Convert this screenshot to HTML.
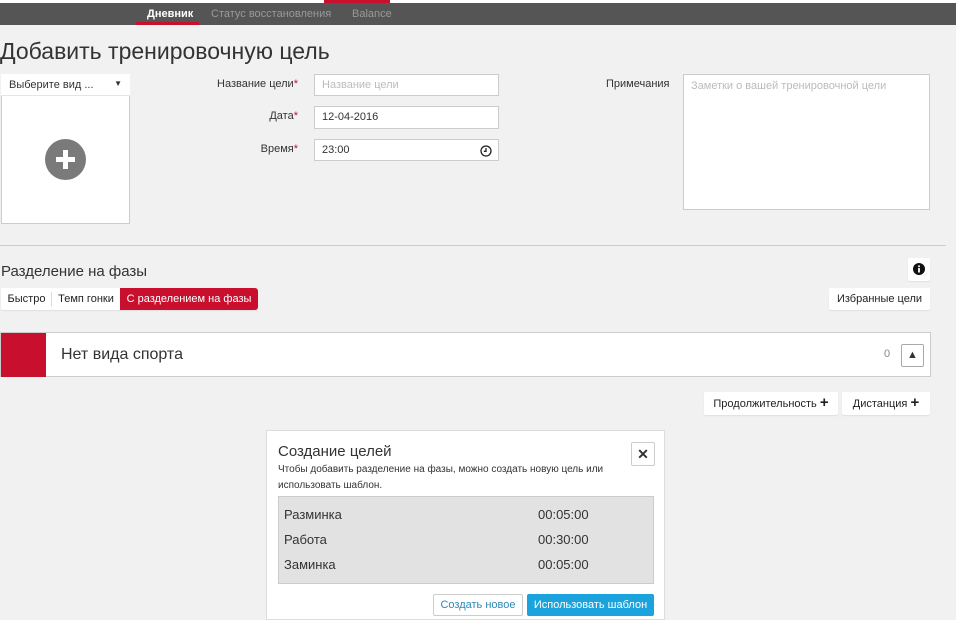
<!DOCTYPE html>
<html><head><meta charset="utf-8"><style>
*{box-sizing:border-box;margin:0;padding:0}
body{width:956px;height:613px;overflow:hidden;background:#f1f1f1;font-family:"Liberation Sans",sans-serif;color:#333;position:relative}
.a{position:absolute}
.inp{position:absolute;background:#fff;border:1px solid #ccc;font-size:11px;padding:0 7px;line-height:20px}
.lbl{position:absolute;font-size:11px;text-align:right;width:200px}
.lbl b{color:#c8102e;font-weight:normal}
.btn{position:absolute;background:#fff;border-radius:2px;box-shadow:0 1px 1px rgba(0,0,0,.08);font-size:11px;text-align:center;line-height:22px;color:#222}
</style></head><body>
<div class="a" style="left:0;top:0;width:956px;height:3px;background:#fff"></div>
<div class="a" style="left:324px;top:0;width:66px;height:3px;background:#c8102e"></div>
<div class="a" style="left:0;top:3px;width:956px;height:22px;background:#555"></div>
<div class="a" style="left:147px;top:8px;font-size:11px;color:#fff;font-weight:bold">Дневник</div>
<div class="a" style="left:136px;top:22px;width:63px;height:3px;background:#c8102e"></div>
<div class="a" style="left:211px;top:8px;font-size:11px;color:#999">Статус восстановления</div>
<div class="a" style="left:352px;top:8px;font-size:11px;color:#999">Balance</div>
<div class="a" style="left:0;top:38px;font-size:23px;color:#333">Добавить тренировочную цель</div>

<div class="a" style="left:1px;top:74px;width:129px;height:22px;background:#fff;font-size:11px;padding:5px 8px;border-bottom:1px solid #e5e5e5">Выберите вид ...<span style="position:absolute;right:8px;top:5px;font-size:8px">▼</span></div>
<div class="a" style="left:1px;top:96px;width:129px;height:128px;background:#fff;border:1px solid #ccc;border-top:none"></div>
<div class="a" style="left:45px;top:139px;width:41px;height:41px;border-radius:50%;background:#7a7a7a"></div>
<div class="a" style="left:56px;top:157px;width:19px;height:5px;background:#fff"></div>
<div class="a" style="left:63px;top:150px;width:5px;height:19px;background:#fff"></div>

<div class="lbl" style="left:98px;top:78px">Название цели<b>*</b></div>
<div class="lbl" style="left:98px;top:110px">Дата<b>*</b></div>
<div class="lbl" style="left:98px;top:143px">Время<b>*</b></div>
<div class="inp" style="left:314px;top:74px;width:185px;height:22px;color:#bbb">Название цели</div>
<div class="inp" style="left:314px;top:106px;width:185px;height:23px">12-04-2016</div>
<div class="inp" style="left:314px;top:139px;width:185px;height:22px">23:00
<svg style="position:absolute;right:6px;top:5px" width="12" height="12" viewBox="0 0 12 12"><circle cx="6" cy="6" r="5" fill="none" stroke="#222" stroke-width="1.3"/><path d="M6 3v3.3H3.8" fill="none" stroke="#222" stroke-width="1.3"/></svg></div>
<div class="a" style="left:606px;top:78px;font-size:11px">Примечания</div>
<div class="inp" style="left:683px;top:74px;width:247px;height:136px;color:#bbb;line-height:22px">Заметки о вашей тренировочной цели</div>

<div class="a" style="left:0;top:245px;width:946px;height:1px;background:#ccc"></div>
<div class="a" style="left:1px;top:263px;font-size:15px">Разделение на фазы</div>
<div class="btn" style="left:908px;top:258px;width:22px;height:23px"><svg width="12" height="12" viewBox="0 0 12 12" style="margin-top:5px"><circle cx="6" cy="6" r="6" fill="#111"/><rect x="5.1" y="5" width="1.8" height="4.5" fill="#fff"/><circle cx="6" cy="3.2" r="1" fill="#fff"/></svg></div>
<div class="btn" style="left:1px;top:288px;width:51px;height:22px;border-radius:2px 0 0 2px">Быстро</div>
<div class="a" style="left:51px;top:292px;width:1px;height:14px;background:#ddd"></div>
<div class="btn" style="left:52px;top:288px;width:68px;height:22px;border-radius:0">Темп гонки</div>
<div class="btn" style="left:120px;top:288px;width:138px;height:22px;background:#c8102e;color:#fff;border-radius:0 3px 3px 0">С разделением на фазы</div>
<div class="btn" style="left:829px;top:288px;width:101px;height:22px">Избранные цели</div>

<div class="a" style="left:0;top:332px;width:931px;height:45px;background:#fff;border:1px solid #ccc"></div>
<div class="a" style="left:1px;top:333px;width:45px;height:44px;background:#c8102e"></div>
<div class="a" style="left:61px;top:346px;font-size:16px">Нет вида спорта</div>
<div class="a" style="left:884px;top:348px;font-size:11px;color:#888">0</div>
<div class="a" style="left:901px;top:344px;width:23px;height:23px;border:1px solid #aaa;border-radius:2px;background:#fff;text-align:center;font-size:11px;line-height:21px">▲</div>

<div class="btn" style="left:704px;top:392px;width:134px;height:23px">Продолжительность <b style="font-size:15px">+</b></div>
<div class="btn" style="left:842px;top:392px;width:88px;height:23px">Дистанция <b style="font-size:15px">+</b></div>

<div class="a" style="left:266px;top:430px;width:399px;height:190px;background:#fff;border:1px solid #ddd"></div>
<div class="a" style="left:278px;top:443px;font-size:15px">Создание целей</div>
<div class="a" style="left:631px;top:442px;width:24px;height:24px;border:1px solid #ccc;border-radius:2px;text-align:center;font-size:14px;font-weight:bold;line-height:22px">✕</div>
<div class="a" style="left:278px;top:462px;font-size:10px;line-height:16px;width:370px">Чтобы добавить разделение на фазы, можно создать новую цель или использовать шаблон.</div>
<div class="a" style="left:278px;top:496px;width:376px;height:88px;background:#e2e2e2;border:1px solid #ccc"></div>
<div class="a" style="left:284px;top:507px;font-size:13px">Разминка</div>
<div class="a" style="left:284px;top:532px;font-size:13px">Работа</div>
<div class="a" style="left:284px;top:557px;font-size:13px">Заминка</div>
<div class="a" style="left:538px;top:507px;font-size:13px">00:05:00</div>
<div class="a" style="left:538px;top:532px;font-size:13px">00:30:00</div>
<div class="a" style="left:538px;top:557px;font-size:13px">00:05:00</div>
<div class="a" style="left:433px;top:594px;width:90px;height:22px;border:1px solid #ccc;border-radius:2px;font-size:11px;color:#2a8ab8;text-align:center;line-height:21px">Создать новое</div>
<div class="a" style="left:527px;top:594px;width:127px;height:22px;background:#1ba3dd;border-radius:2px;font-size:11px;color:#fff;text-align:center;line-height:22px">Использовать шаблон</div>
</body></html>
